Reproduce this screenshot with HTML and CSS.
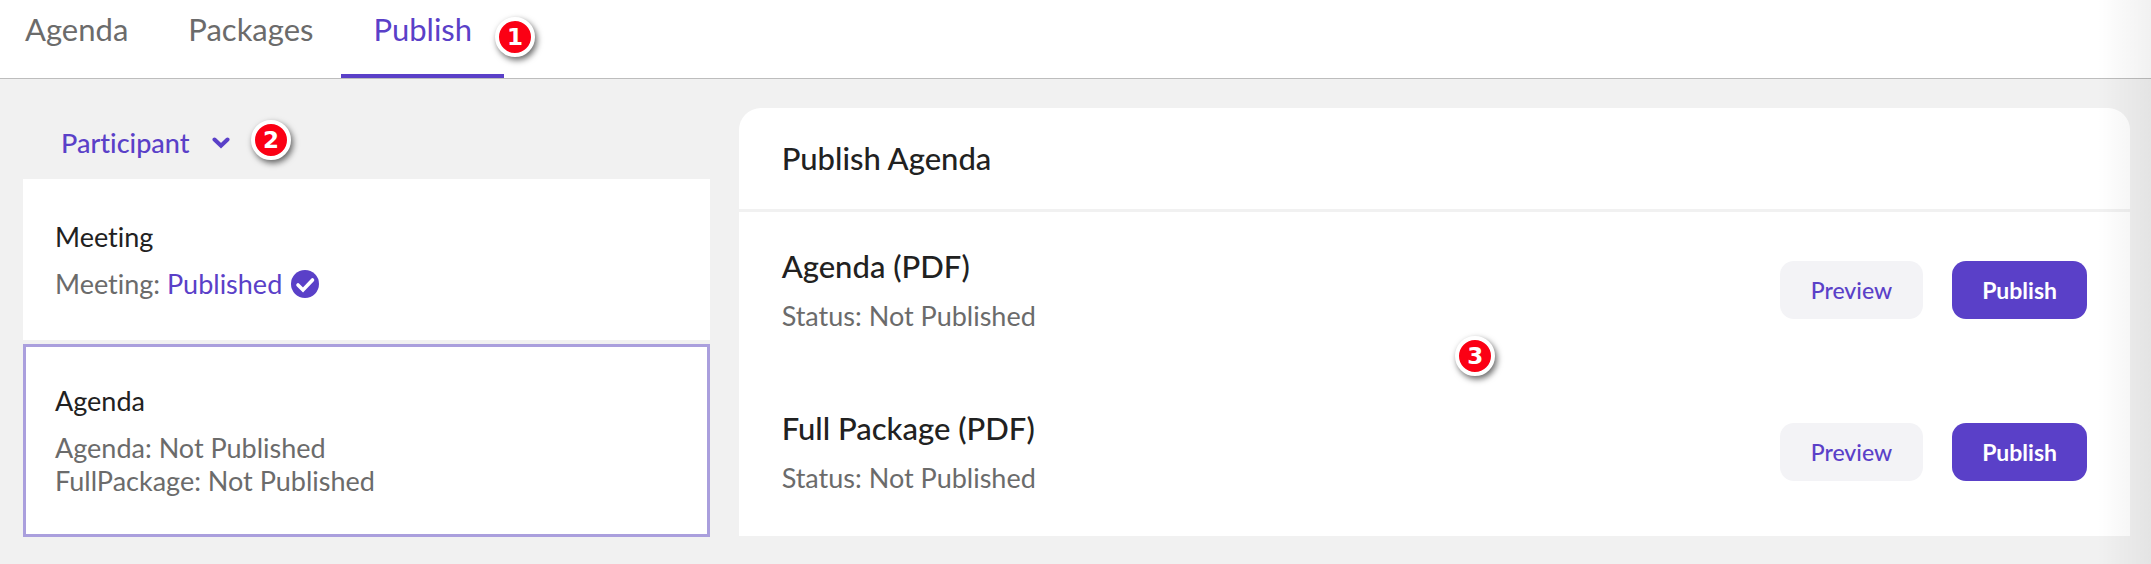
FILE: index.html
```html
<!DOCTYPE html>
<html lang="en">
<head>
  <meta charset="UTF-8">
  <meta name="viewport" content="width=device-width, initial-scale=1.0">
  <title>Publish Agenda</title>
  <link rel="stylesheet" href="styles.css">
</head>

<body>
  <nav class="tabs">
    <a class="tab" href="#agenda">Agenda</a>
    <a class="tab" href="#packages">Packages</a>
    <a class="tab active" href="#publish">Publish<span class="marker marker-tab">1</span></a>
  </nav>

  <main class="content">
    <section class="sidebar">
      <div class="role-picker">
        <select class="role-select" aria-label="Role">
          <option>Participant</option>
        </select>
        <svg class="chevron" viewBox="0 0 18 12" aria-hidden="true">
          <path d="M2.5 2.5 L9 8.8 L15.5 2.5" />
        </svg>
        <span class="marker marker-role">2</span>
      </div>

      <article class="card">
        <h3>Meeting</h3>
        <p>Meeting: <span class="published">Published</span>
          <svg class="check" viewBox="0 0 28 28" aria-hidden="true">
            <circle cx="14" cy="14" r="14" />
            <path d="M7 15 L12 20 L21.5 10" />
          </svg>
        </p>
      </article>

      <article class="card selected">
        <h3>Agenda</h3>
        <p>Agenda: Not Published</p>
        <p>FullPackage: Not Published</p>
      </article>
    </section>

    <section class="panel">
      <h2 class="panel-header">Publish Agenda</h2>
      <div class="row">
        <div class="row-text">
          <h3>Agenda (PDF)</h3>
          <p>Status: Not Published</p>
        </div>
        <button class="btn btn-light" type="button">Preview</button>
        <button class="btn btn-primary" type="button">Publish</button>
      </div>
      <div class="row">
        <div class="row-text">
          <h3>Full Package (PDF)</h3>
          <p>Status: Not Published</p>
        </div>
        <button class="btn btn-light" type="button">Preview</button>
        <button class="btn btn-primary" type="button">Publish</button>
      </div>
      <span class="marker marker-panel">3</span>
    </section>
  </main>

  <div class="edge-shadow"></div>
</body>
</html>
```

FILE: styles.css
```css
* {
  box-sizing: border-box;
}

body {
  position: relative;
  min-height: 100vh;
  margin: 0;
  font-family: Lato, sans-serif;
  font-size: 27px;
  line-height: 33px;
  font-variant-ligatures: none;
  color: #212121;
  background-color: #f1f1f1;
}

h2, h3, p {
  margin: 0;
  font-weight: 400;
}

/* Tabs */
.tabs {
  display: flex;
  padding-left: 25px;
  background: white;
  border-bottom: 1px solid #bdbdbd;
}

.tab {
  position: relative;
  padding: 11px 30px 27px;
  border-bottom: 4px solid transparent;
  font-size: 31px;
  line-height: 36px;
  color: #6b6b6b;
  text-decoration: none;
}

.tab:first-child {
  padding-left: 0;
}

.tab.active {
  margin-left: -2px;
  padding-left: 32px;
  padding-right: 32px;
  color: #5a40c8;
  border-bottom-color: #5a40c8;
}

/* Layout */
.content {
  display: grid;
  grid-template-columns: 38fr 77fr;
  gap: 29px;
  align-items: start;
  padding: 29px 21px 26px 23px;
}

/* Left column */
.role-picker {
  position: relative;
  width: fit-content;
  padding: 18px 0 20px 38px;
}

.role-select {
  display: block;
  height: 33px;
  padding: 0 40px 0 0;
  border: none;
  appearance: none;
  background: transparent;
  font: inherit;
  font-weight: 500;
  font-variant-ligatures: none;
  color: #5a40c8;
  cursor: pointer;
}

.chevron {
  position: absolute;
  right: 0;
  top: 29px;
  width: 18px;
  height: 12px;
  pointer-events: none;
}

.chevron path {
  fill: none;
  stroke: #5a40c8;
  stroke-width: 4;
  stroke-linecap: round;
}

.card {
  padding: 41px 32px 40px;
  background: white;
}

.card.selected {
  margin-top: 4px;
  padding: 37px 29px;
  border: 3px solid #aa9fdd;
}

.card h3 {
  margin-bottom: 14px;
  font-size: 27px;
}

.card p {
  color: #6b6b6b;
}

.card .published {
  color: #5a40c8;
}

.check {
  width: 28px;
  height: 28px;
  margin-left: 2px;
  vertical-align: -4px;
}

.check circle {
  fill: #5a40c8;
}

.check path {
  fill: none;
  stroke: white;
  stroke-width: 3.6;
  stroke-linecap: round;
}

/* Publish panel */
.panel {
  position: relative;
  background: white;
  border-radius: 22px 22px 0 0;
}

.panel-header {
  padding: 32px 43px;
  border-bottom: 3px solid #f1f1f1;
  font-size: 31px;
  font-weight: 500;
  line-height: 37px;
}

.row {
  display: flex;
  align-items: center;
  gap: 29px;
  padding: 36px 43px 42px;
}

.row-text {
  flex: 1;
}

.row h3 {
  margin-bottom: 15px;
  font-size: 31px;
  font-weight: 500;
  line-height: 36px;
}

.row p {
  color: #6b6b6b;
}

.btn {
  height: 58px;
  padding: 0 30px;
  border: none;
  border-radius: 14px;
  font-family: inherit;
  font-size: 23px;
  font-weight: 500;
  cursor: pointer;
}

.btn-light {
  padding: 0 31px;
  color: #5a40c8;
  background: #f3f3f6;
}

.btn-primary {
  color: white;
  background: #5a40c8;
  font-weight: 700;
}

/* Numbered markers */
.marker {
  position: absolute;
  width: 40px;
  height: 40px;
  border: 4px solid white;
  border-radius: 50%;
  background: #fb0014;
  box-shadow: 2px 3px 6px rgba(0, 0, 0, 0.6);
  color: white;
  font-family: "DejaVu Sans", sans-serif;
  font-size: 23px;
  font-weight: 700;
  line-height: 32px;
  text-align: center;
}

.marker-tab {
  top: 17px;
  right: -31px;
}

.marker-role {
  top: 12px;
  right: -61px;
}

.marker-panel {
  top: 228px;
  left: 51.5%;
}

/* Fade along the right edge of the window */
.edge-shadow {
  position: absolute;
  top: 0;
  right: 0;
  bottom: 0;
  width: 54px;
  background: linear-gradient(to right, transparent, rgba(0, 0, 0, 0.055));
  pointer-events: none;
}
```
